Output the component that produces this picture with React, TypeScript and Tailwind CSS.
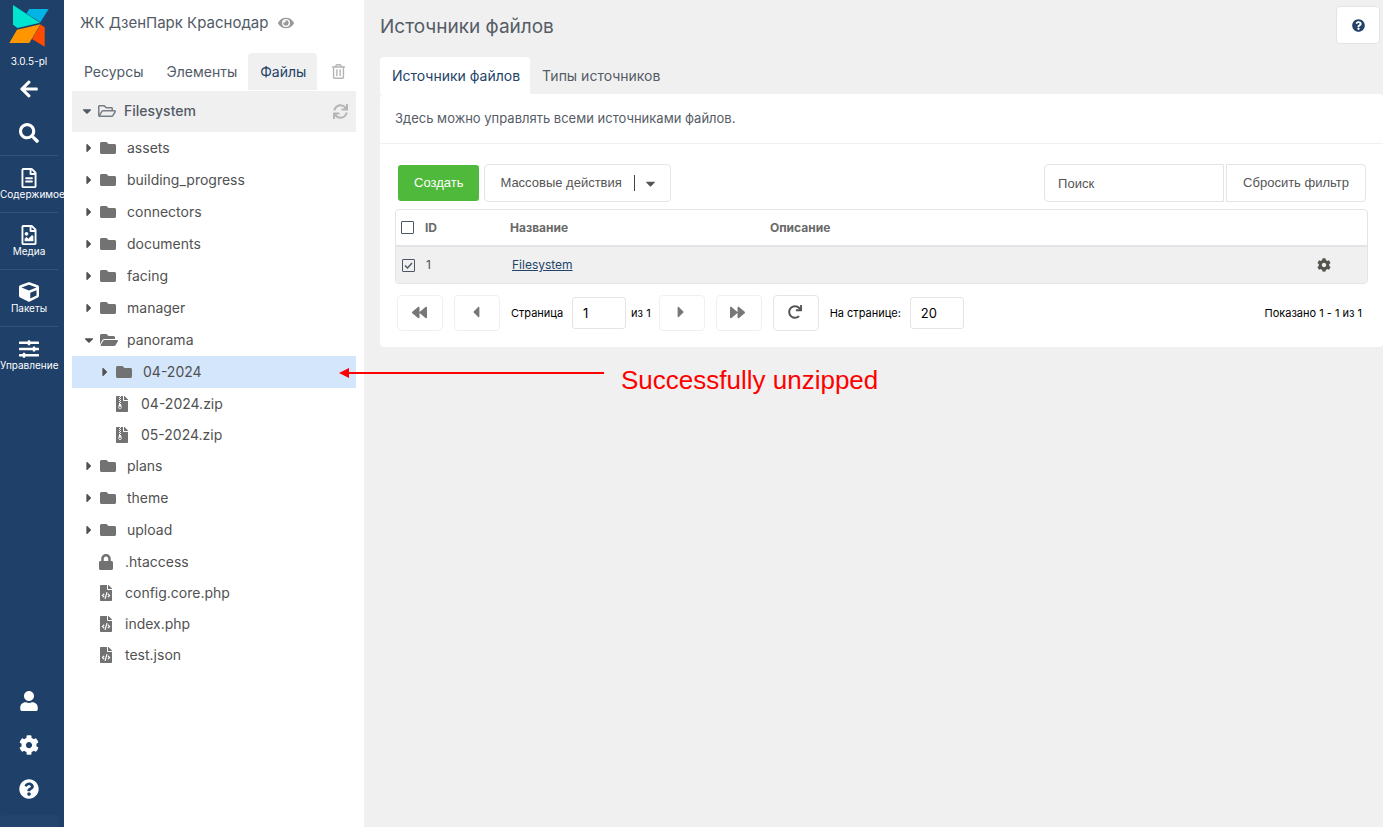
import { useState } from "react";
import type { ReactNode } from "react";
import {
  FaArrowLeft,
  FaBackward,
  FaCaretDown,
  FaCaretLeft,
  FaCaretRight,
  FaCog,
  FaCube,
  FaEye,
  FaFileArchive,
  FaFileCode,
  FaFolder,
  FaFolderOpen,
  FaForward,
  FaLock,
  FaQuestionCircle,
  FaRedo,
  FaRegFileAlt,
  FaRegFileImage,
  FaRegFolderOpen,
  FaRegTrashAlt,
  FaSearch,
  FaSlidersH,
  FaSync,
  FaUser,
} from "react-icons/fa";

type NodeKind = "folder" | "open" | "zip" | "code" | "lock";

type TreeNode = {
  name: string;
  kind: NodeKind;
  nested?: boolean;
};

const nodes: TreeNode[] = [
  { name: "assets", kind: "folder" },
  { name: "building_progress", kind: "folder" },
  { name: "connectors", kind: "folder" },
  { name: "documents", kind: "folder" },
  { name: "facing", kind: "folder" },
  { name: "manager", kind: "folder" },
  { name: "panorama", kind: "open" },
  { name: "04-2024", kind: "folder", nested: true },
  { name: "04-2024.zip", kind: "zip", nested: true },
  { name: "05-2024.zip", kind: "zip", nested: true },
  { name: "plans", kind: "folder" },
  { name: "theme", kind: "folder" },
  { name: "upload", kind: "folder" },
  { name: ".htaccess", kind: "lock" },
  { name: "config.core.php", kind: "code" },
  { name: "index.php", kind: "code" },
  { name: "test.json", kind: "code" },
];

const menu = [
  { label: "Содержимое", icon: <FaRegFileAlt size={20} /> },
  { label: "Медиа", icon: <FaRegFileImage size={20} /> },
  { label: "Пакеты", icon: <FaCube size={20} /> },
  { label: "Управление", icon: <FaSlidersH size={20} /> },
];

const nodeIcons: Record<NodeKind, ReactNode> = {
  folder: <FaFolder size={16} />,
  open: <FaFolderOpen size={18} />,
  zip: <FaFileArchive size={16} />,
  code: <FaFileCode size={16} />,
  lock: <FaLock size={16} />,
};

function Logo() {
  return (
    <svg viewBox="9 5 40 42" className="h-[42px] w-10" aria-hidden="true">
      <path d="M29.300 9H48.700L40.300 22.300L26.500 13.500z" fill="#00b5e5" />
      <path d="M13 5L40 22.700L17.500 28L13 24.800z" fill="#00e5d0" />
      <path d="M40.700 24.500L44.700 27.300V46.700L32 39z" fill="#ff4a00" />
      <path d="M17 29.700L40.500 24.300L29.300 43H9.300z" fill="#ff9600" />
    </svg>
  );
}

function RailButton({ label, children }: { label: string; children: ReactNode }) {
  return (
    <button type="button" aria-label={label} className="flex h-11 w-full items-center justify-center">
      {children}
    </button>
  );
}

function Sidebar() {
  return (
    <nav className="flex w-16 shrink-0 flex-col bg-[#1e4069] text-white">
      <div className="flex w-[58px] grow flex-col">
        <a href="#" aria-label="MODX" className="flex justify-center pt-[5px]">
          <Logo />
        </a>
        <span className="pt-2 text-center text-[10px] leading-3">3.0.5-pl</span>
        <RailButton label="Назад">
          <FaArrowLeft size={20} />
        </RailButton>
        <RailButton label="Поиск">
          <FaSearch size={20} />
        </RailButton>
        <ul>
          {menu.map((item) => (
            <li key={item.label} className="border-t border-[#34537a]">
              <a href="#" className="flex h-14 flex-col pt-3 text-center text-[10px] leading-3 whitespace-nowrap">
                <span className="flex justify-center">{item.icon}</span>
                {item.label}
              </a>
            </li>
          ))}
        </ul>
        <div className="mt-auto">
          <RailButton label="Профиль">
            <FaUser size={20} />
          </RailButton>
          <RailButton label="Настройки">
            <FaCog size={20} />
          </RailButton>
          <RailButton label="Помощь">
            <FaQuestionCircle size={20} />
          </RailButton>
        </div>
        <div className="mt-1 h-3 rounded-t bg-[#23446d]" />
      </div>
    </nav>
  );
}

function TreeRow({
  node,
  selected,
  onSelect,
}: {
  node: TreeNode;
  selected: boolean;
  onSelect: () => void;
}) {
  const isFolder = node.kind === "folder" || node.kind === "open";

  return (
    <li>
      <button
        type="button"
        onClick={onSelect}
        className={`flex w-full items-center text-left text-sm text-[#515151] ${
          isFolder ? "h-8" : "h-[31px]"
        } ${node.nested ? "pl-[26px]" : "pl-2.5"} ${selected ? "bg-[#d4e6fb]" : ""}`}
      >
        <span className={`flex ${isFolder ? "w-[18px]" : "w-4"}`}>
          {node.kind === "folder" && <FaCaretRight size={14} />}
          {node.kind === "open" && <FaCaretDown size={14} />}
        </span>
        <span className="flex w-[27px] text-[#727272]">{nodeIcons[node.kind]}</span>
        {node.name}
      </button>
    </li>
  );
}

function FileTree() {
  const [selected, setSelected] = useState("04-2024");

  return (
    <aside className="w-[300px] shrink-0 bg-white px-2 text-[#515a66]">
      <div className="flex h-[53px] items-center gap-2.5 pb-[7px] pl-2 text-[15px]">
        <span>ЖК ДзенПарк Краснодар</span>
        <FaEye size={16} className="text-[#999]" />
      </div>
      <div className="flex h-[38px] items-stretch pb-px text-sm">
        <button type="button" className="pr-[11px] pl-3">Ресурсы</button>
        <button type="button" className="pr-[11px] pl-3">Элементы</button>
        <button type="button" className="rounded-t bg-[#f0f0f0] pr-[11px] pl-3 text-[#234368]">
          Файлы
        </button>
        <button type="button" aria-label="Очистить корзину" className="px-3.5 text-[#b5b5b5]">
          <FaRegTrashAlt size={15} />
        </button>
      </div>
      <div className="flex h-[41px] items-center bg-[#f0f0f0] px-2 pb-px text-sm font-medium">
        <FaCaretDown size={14} />
        <FaRegFolderOpen size={18} className="ml-1 text-[#777d85]" />
        <span className="ml-2 grow">Filesystem</span>
        <button type="button" aria-label="Обновить дерево" className="text-[#b5b5b5]">
          <FaSync size={15} />
        </button>
      </div>
      <ul>
        {nodes.map((node) => (
          <TreeRow
            key={node.name}
            node={node}
            selected={node.name === selected}
            onSelect={() => setSelected(node.name)}
          />
        ))}
      </ul>
    </aside>
  );
}

function Checkbox({
  label,
  checked,
  onChange,
}: {
  label: string;
  checked: boolean;
  onChange: () => void;
}) {
  return (
    <span className="relative block size-[13px]">
      <input
        type="checkbox"
        aria-label={label}
        checked={checked}
        onChange={onChange}
        className="block size-[13px] appearance-none rounded-[1px] border border-[#4b5563]"
      />
      {checked && (
        <svg viewBox="0 0 13 13" className="pointer-events-none absolute inset-0" aria-hidden="true">
          <path d="M3 6.500l2.500 2.500L10 4" fill="none" stroke="#515a66" strokeWidth="1.500" />
        </svg>
      )}
    </span>
  );
}

function SourcesTable() {
  const [checked, setChecked] = useState(true);
  const [all, setAll] = useState(false);

  return (
    <div className="mx-[15px] mt-[7px] overflow-hidden rounded border border-[#e4e4e8]">
      <table className="w-full table-fixed text-left text-xs">
        <thead>
          <tr className="h-9 border-b-2 border-[#e4e4e8] text-[#696969]">
            <th className="w-[29px] pl-[5px]">
              <Checkbox label="Выбрать все" checked={all} onChange={() => setAll(!all)} />
            </th>
            <th className="w-[85px] font-bold">ID</th>
            <th className="w-[260px] font-bold">Название</th>
            <th className="font-bold">Описание</th>
            <th className="w-[50px]" />
          </tr>
        </thead>
        <tbody>
          <tr className="h-[37px] bg-[#f0f0f0] text-[#515151]">
            <td className="pl-1.5">
              <Checkbox label="Выбрать Filesystem" checked={checked} onChange={() => setChecked(!checked)} />
            </td>
            <td className="pl-px">1</td>
            <td className="pl-0.5">
              <a href="#" className="text-[#234368] underline">Filesystem</a>
            </td>
            <td />
            <td>
              <button type="button" aria-label="Действия" className="flex text-[#555550]">
                <FaCog size={14} />
              </button>
            </td>
          </tr>
        </tbody>
      </table>
    </div>
  );
}

function PagerButton({
  label,
  muted,
  children,
}: {
  label: string;
  muted?: boolean;
  children: ReactNode;
}) {
  return (
    <button
      type="button"
      aria-label={label}
      className={`flex h-9 w-[46px] items-center justify-center rounded border bg-white pr-0.5 pb-0.5 ${
        muted ? "border-[#f0f0f0] text-[#777]" : "border-[#e4e4e4] text-[#555]"
      }`}
    >
      {children}
    </button>
  );
}

function Pager() {
  return (
    <div className="flex items-center px-[17px] pt-[11px] pb-4 text-[11px] text-black">
      <div className="flex items-center gap-[11px]">
        <PagerButton label="Первая страница" muted>
          <FaBackward size={15} />
        </PagerButton>
        <PagerButton label="Предыдущая страница" muted>
          <FaCaretLeft size={18} />
        </PagerButton>
        <label className="flex items-center gap-[9px]">
          Страница
          <input
            defaultValue="1"
            className="h-8 w-[54px] rounded-[3px] border border-[#e4e4e4] px-2.5 text-[13px]"
          />
        </label>
      </div>
      <span className="pr-2 pl-[5px]">из 1</span>
      <div className="flex items-center gap-[11px]">
        <PagerButton label="Следующая страница" muted>
          <FaCaretRight size={18} />
        </PagerButton>
        <PagerButton label="Последняя страница" muted>
          <FaForward size={15} />
        </PagerButton>
        <PagerButton label="Обновить">
          <FaRedo size={14} />
        </PagerButton>
        <label className="flex items-center gap-[9px]">
          На странице:
          <input
            defaultValue="20"
            className="h-8 w-[54px] rounded-[3px] border border-[#e4e4e4] px-2.5 text-[13px]"
          />
        </label>
      </div>
      <span className="ml-auto pr-1">Показано 1 - 1 из 1</span>
    </div>
  );
}

function SourcesPanel() {
  return (
    <main className="min-w-0 grow pl-4 text-[#555c66]">
      <header className="flex h-[57px] items-start justify-between pt-1.5 pr-[3px]">
        <h1 className="text-[19px] leading-[42px]">Источники файлов</h1>
        <button
          type="button"
          aria-label="Помощь"
          className="flex h-[38px] w-11 items-center justify-center rounded border border-[#e4e4e4] bg-white text-[#234368]"
        >
          <FaQuestionCircle size={13} />
        </button>
      </header>
      <div className="flex h-[37px] text-sm">
        <button type="button" className="rounded-t bg-white pr-2.5 pl-3 text-[#234368]">
          Источники файлов
        </button>
        <button type="button" className="pr-2.5 pl-3">Типы источников</button>
      </div>
      <section className="rounded bg-white">
        <p className="border-b border-[#f0f0f0] px-[15px] py-[15px] text-[13px] leading-[19px]">
          Здесь можно управлять всеми источниками файлов.
        </p>
        <div className="flex items-center px-[17px] pt-5 font-['Liberation_Sans',sans-serif] text-[13px] text-[#555]">
          <button type="button" className="ml-px h-9 rounded-[3px] bg-[#4fb93b] px-4 text-white">
            Создать
          </button>
          <button
            type="button"
            className="ml-[5px] flex h-[38px] items-center rounded border border-[#e4e4e4] pr-3 pl-[15px]"
          >
            Массовые действия
            <span className="mr-2 ml-3 h-4 w-px bg-[#444]" />
            <FaCaretDown size={15} />
          </button>
          <input
            aria-label="Поиск"
            placeholder="Поиск"
            className="ml-auto h-[38px] w-[180px] rounded-l border border-[#e4e4e4] px-[13px] placeholder:text-[#555]"
          />
          <button type="button" className="ml-0.5 h-[38px] rounded-r border border-[#e4e4e4] px-4">
            Сбросить фильтр
          </button>
        </div>
        <SourcesTable />
        <Pager />
      </section>
    </main>
  );
}

export default function App() {
  return (
    <div className="relative flex min-h-screen bg-[#f0f0f0] font-[Inter,sans-serif]">
      <Sidebar />
      <FileTree />
      <SourcesPanel />
      {/* callout drawn over the tree and the empty area */}
      <div className="pointer-events-none absolute top-[364px] left-[339px] flex items-start gap-[17px] text-[#ff0000]">
        <svg viewBox="0 0 265 18" className="h-[18px] w-[265px]" aria-hidden="true">
          <path d="M8 9h257" stroke="currentColor" strokeWidth="2" />
          <path d="M0 9l10-5v10z" fill="currentColor" />
        </svg>
        <span className="font-['Liberation_Sans',sans-serif] text-[26px] leading-8">
          Successfully unzipped
        </span>
      </div>
    </div>
  );
}
